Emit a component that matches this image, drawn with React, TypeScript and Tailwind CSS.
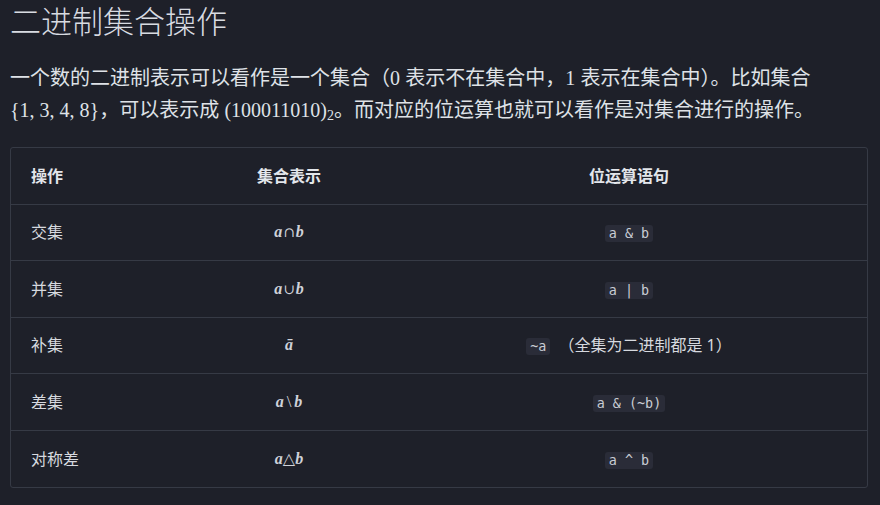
import React from "react";

type Row = {
  op: string;
  math: React.ReactNode;
  code: string;
  note?: string;
};

const Var = ({ children }: { children: React.ReactNode }) => (
  <span className="italic font-bold">{children}</span>
);

// symbols read better in DejaVu Serif (wider cap/cup glyphs)
const Sym = ({ children }: { children: React.ReactNode }) => (
  <span className="font-['DejaVu_Serif',serif] text-[14px] mx-[1px]">{children}</span>
);

const rows: Row[] = [
  {
    op: "交集",
    math: (
      <>
        <Var>a</Var>
        <Sym>∩</Sym>
        <Var>b</Var>
      </>
    ),
    code: "a & b",
  },
  {
    op: "并集",
    math: (
      <>
        <Var>a</Var>
        <Sym>∪</Sym>
        <Var>b</Var>
      </>
    ),
    code: "a | b",
  },
  {
    op: "补集",
    math: <Var>ā</Var>,
    code: "~a",
    note: "（全集为二进制都是 1）",
  },
  {
    op: "差集",
    math: (
      <>
        <Var>a</Var>
        <span className="mx-[3px] text-[17px]">\</span>
        <Var>b</Var>
      </>
    ),
    code: "a & (~b)",
  },
  {
    op: "对称差",
    math: (
      <>
        <Var>a</Var>
        <span>△</span>
        <Var>b</Var>
      </>
    ),
    code: "a ^ b",
  },
];

const sans = "font-['Noto_Sans','Noto_Sans_CJK_SC',sans-serif]";
const serif = "font-['Liberation_Serif','DejaVu_Serif',serif]";
const codeClass =
  "font-['DejaVu_Sans_Mono','Liberation_Mono',monospace] text-[13.4px] leading-[17px] bg-[#2a2c38] text-[#c9ccd4] rounded-[3px] px-[4px] py-0 whitespace-pre inline-block";

export default function App() {
  return (
    <div
      className={`min-h-[505px] bg-[#1e2029] text-[#dcdfe5] pl-[10px] pr-[12px] ${sans}`}
    >
      <h1 className="text-[31px] leading-[42px] font-light text-[#d8dbe1] m-0 pt-0">
        二进制集合操作
      </h1>

      <p className="text-[20px] leading-[32px] mt-[20px] text-[#dfe2e7]">
        一个数的二进制表示可以看作是一个集合（<span className={serif}>0</span>{" "}
        表示不在集合中，<span className={serif}>1</span> 表示在集合中）。比如集合
        <br />
        <span className={serif}>{"{1, 3, 4, 8}"}</span>，可以表示成{" "}
        <span className={serif}>
          (100011010)<span className="text-[14px] align-[-3px] leading-none">2</span>
        </span>
        。而对应的位运算也就可以看作是对集合进行的操作。
      </p>

      <div className="mt-[21px] w-[858px] border border-[#363a45] rounded-[3px] overflow-hidden">
        <table className="w-full border-collapse text-[16px]">
          <thead>
            <tr className="h-[56px]">
              <th className="w-[176px] text-left pl-[20px] font-bold text-[#e3e6eb]">
                操作
              </th>
              <th className="w-[204px] text-center font-bold text-[#e3e6eb]">
                集合表示
              </th>
              <th className="text-center font-bold text-[#e3e6eb]">位运算语句</th>
            </tr>
          </thead>
          <tbody>
            {rows.map((r) => (
              <tr key={r.op} className="h-[56.6px] border-t border-[#363a45]">
                <td className="pl-[20px] text-[#d6d9df]">{r.op}</td>
                <td className={`text-center text-[16px] text-[#cfd2d9] ${serif}`}>
                  {r.math}
                </td>
                <td className="text-center text-[#d6d9df]">
                  <code className={codeClass}>{r.code}</code>
                  {r.note && <span className="ml-[8px]">{r.note}</span>}
                </td>
              </tr>
            ))}
          </tbody>
        </table>
      </div>
    </div>
  );
}
